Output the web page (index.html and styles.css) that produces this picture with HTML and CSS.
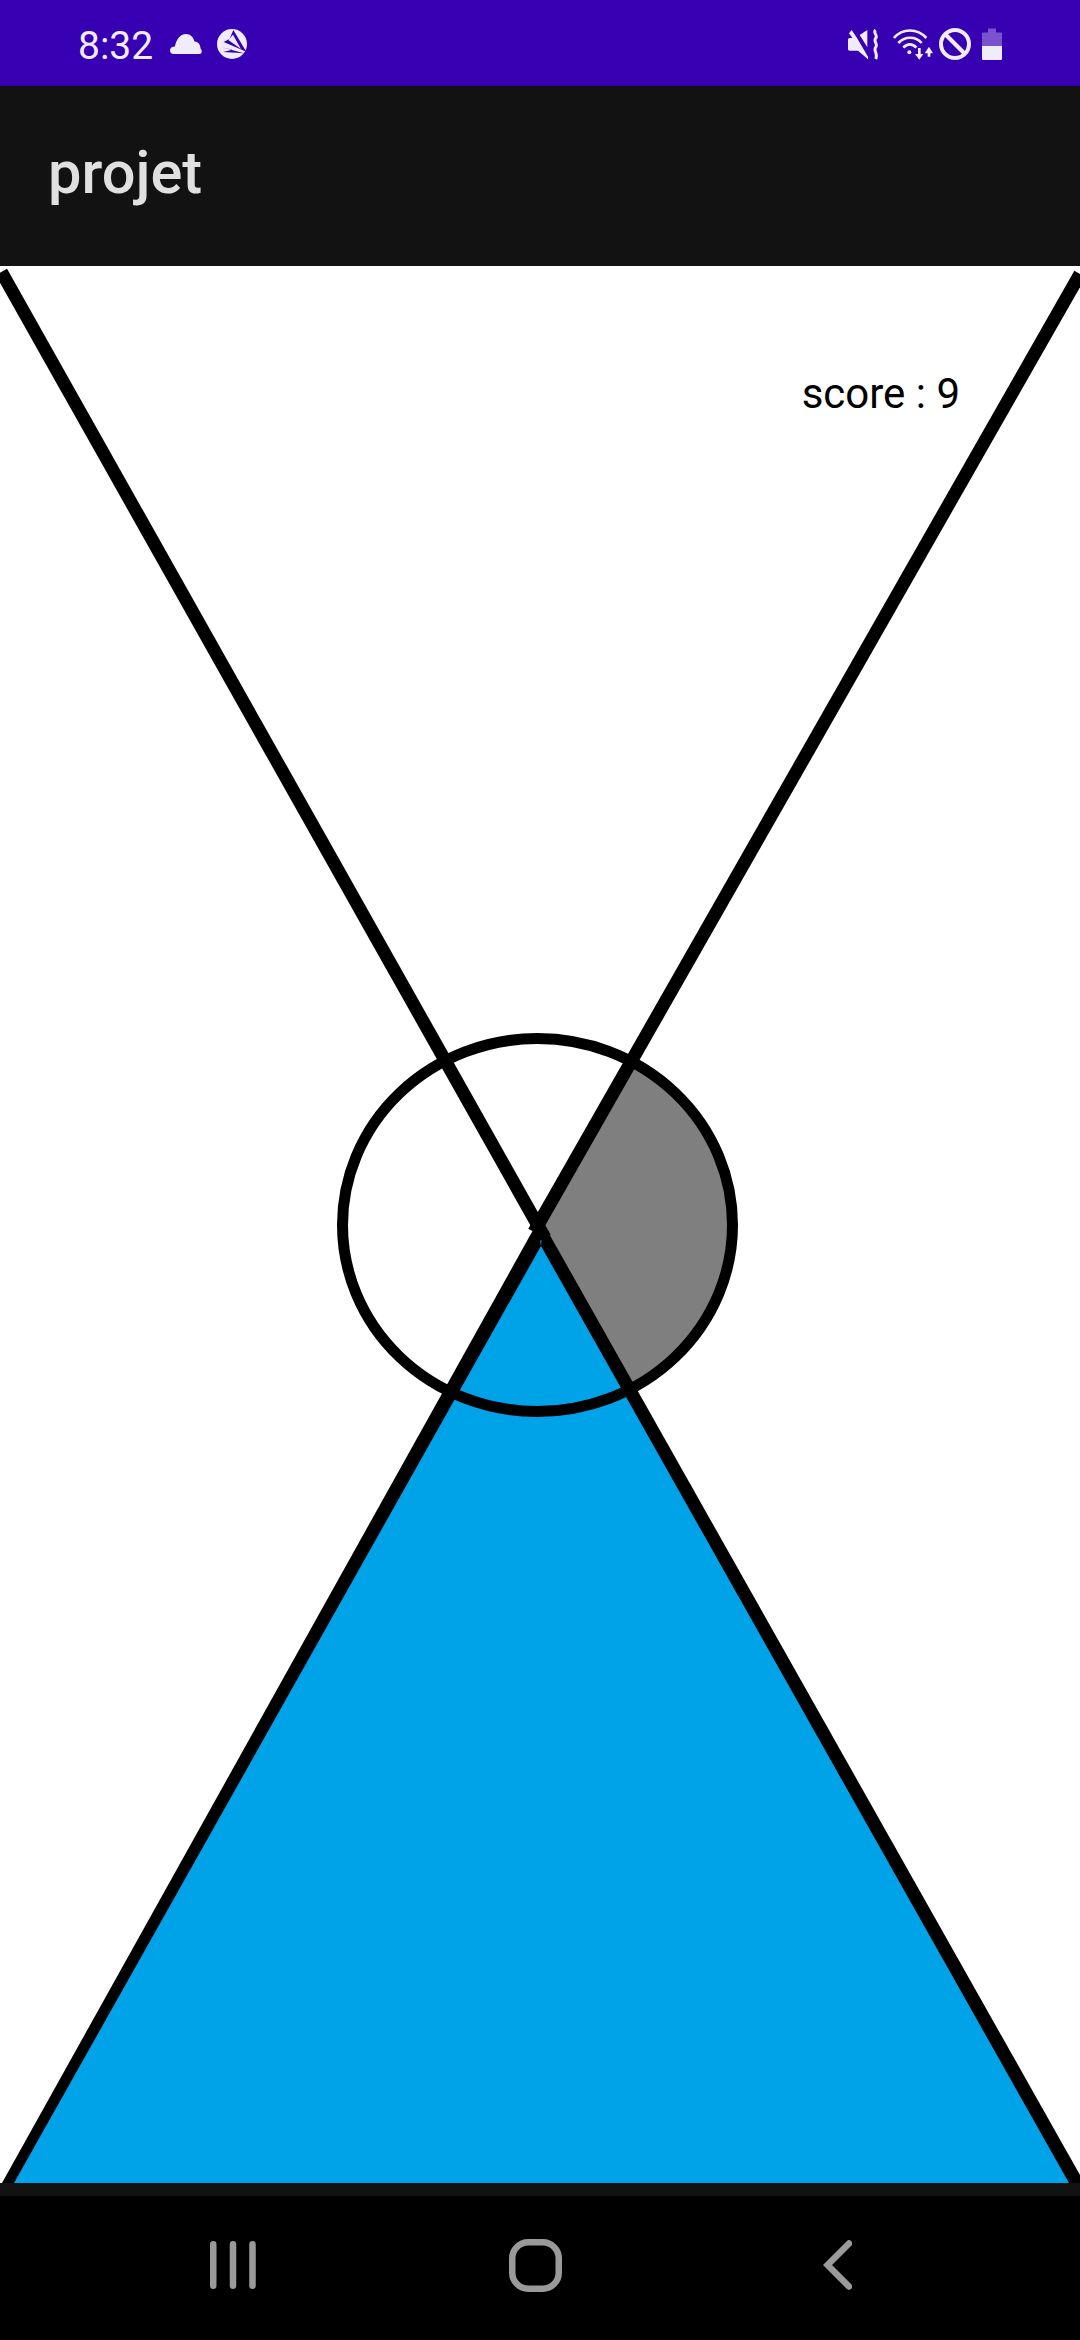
FILE: index.html
```html
<!DOCTYPE html>
<html lang="fr">
<head>
<meta charset="utf-8">
<title>projet</title>
<link rel="stylesheet" href="styles.css">
</head>
<body>
<div class="screen">
  <header class="status">
    <div class="status-left">
      <span class="time">8:32</span>
      <svg class="ic-cloud" viewBox="0 0 32 20"><path d="M3.500 20C1 20 0 18 0 16.500C0 14 2 12.500 5 12.500C6 6 10 0 16 0C20.500 0 23.500 3.500 24.500 7.500C28 7.500 30.500 10.500 30.500 14.500C32 15.500 32.500 20 29.500 20Z"/></svg>
      <svg class="ic-app" viewBox="654 87 90 90"><circle class="fg" cx="699" cy="132" r="45"/><path class="cut" d="M703 90L742 155L674 126L692 116Z"/><path class="fg" d="M702 104L726 147L688 120Z"/><path class="cut" d="M668 142L735 160L672 156L700 149Z"/></svg>
    </div>
    <div class="status-right">
      <svg class="ic-mute" viewBox="145 85 96 93"><path class="fill" d="M148 98L156 88L172 112L205 168V176L175 150H150Q145 150 145 145V117Q145 112 150 112H158Z"/><path class="fill" d="M180 103L203 88V140Z"/><path class="wave" d="M228 88C218 96 236 104 228 113C220 122 236 130 228 140C220 150 236 158 228 175"/></svg>
      <svg class="ic-wifi" viewBox="277 85 120 93"><path class="arc" d="M280 112C305 82 350 82 377 112"/><path class="arc" d="M293 127C312 106 345 106 363 127"/><path class="arc" d="M308 141C320 128 335 128 347 141"/><circle cx="326" cy="155" r="6"/><path d="M352 142H360V160H368L356 177L343 160H352Z"/><path d="M381 168V158H372L385 138L397 158H389V168Z"/></svg>
      <svg class="ic-block" viewBox="0 0 32 32"><circle cx="16" cy="16" r="14"/><path d="M6.500 6.500L25.500 25.500"/></svg>
      <svg class="ic-batt" viewBox="0 0 20 32"><path class="empty" d="M6 .5H14V4.500H18.500C19.500 4.500 20 5 20 6V18H0V6C0 5 .5 4.500 1.500 4.500H6Z"/><path class="full" d="M0 18H20V30.500C20 31.500 19.500 32 18.500 32H1.500C.5 32 0 31.500 0 30.500Z"/></svg>
    </div>
  </header>
  <header class="appbar"><h1 class="title">projet</h1></header>
  <main class="stage">
    <svg class="drawing" viewBox="0 0 1080 1917">
      <path class="blue" d="M8 1917L540 970L1075 1917Z"/>
      <path class="grey" d="M538 961L633 797A195 186.500 0 0 1 627 1121Z"/>
      <ellipse class="ring" cx="537.500" cy="959" rx="195" ry="186.500"/>
      <path class="line" d="M1.400 6L545 972"/>
      <path class="line" d="M1080 8L534 966"/>
      <path class="edge" d="M537 957L2 1917H14L541 980Z"/>
      <path class="edge" d="M541 980L1069 1917H1080L1080 1909L543 957Z"/>
    </svg>
    <p class="score">score : 9</p>
  </main>
  <div class="band"></div>
  <nav class="navbar">
    <svg class="ic-recents" viewBox="0 0 46 48"><path d="M3.250 3.250V44.750M23 3.250V44.750M42.500 3.250V44.750"/></svg>
    <svg class="ic-home" viewBox="0 0 53 53"><rect x="3.250" y="3.250" width="46.500" height="46.500" rx="16"/></svg>
    <svg class="ic-back" viewBox="0 0 29 50"><path d="M26 3.500L4.500 25L26 46.500"/></svg>
  </nav>
</div>
</body>
</html>
```
FILE: styles.css
```css
html, body { margin: 0; padding: 0; }
body { background: #fff; font-family: Roboto, "Liberation Sans", sans-serif; }
.screen { width: 1080px; height: 2340px; display: flex; flex-direction: column; overflow: hidden; }

.status { height: 86px; flex: none; background: #3700b3; display: flex; justify-content: space-between; align-items: center; box-sizing: border-box; padding: 2px 78px 0 78px; color: #f1ecfb; }
.status-left, .status-right { display: flex; align-items: center; }
.time { font-size: 39px; font-weight: 400; line-height: 46px; padding-top: 3px; color: #f1ecfb; margin-right: 17px; }
.status svg { display: block; fill: #f1ecfb; }
.ic-cloud { width: 32px; height: 20px; margin-right: 15px; }
.ic-app { width: 30px; height: 30px; }
.ic-app .fg { fill: #f1ecfb; }
.ic-app .cut { fill: #3700b3; }
.ic-mute { width: 32px; height: 31px; margin-right: 13px; }
.ic-mute .wave { fill: none; stroke: #f1ecfb; stroke-width: 9; }
.ic-wifi { width: 40px; height: 31px; margin-right: 6px; }
.ic-wifi .arc { fill: none; stroke: #f1ecfb; stroke-width: 8; }
.status .ic-block { width: 32px; height: 32px; margin-right: 11px; fill: none; stroke: #f1ecfb; stroke-width: 4; }
.ic-batt { width: 20px; height: 32px; }
.ic-batt .empty { fill: #7a53cc; }
.ic-batt .full { fill: #f1ecfb; }

.appbar { height: 180px; flex: none; box-sizing: border-box; background: #121212; display: flex; align-items: center; padding: 0 0 6px 48px; }
.title { margin: 0; font-size: 59.500px; font-weight: 500; color: #e0e0e0; }

.stage { position: relative; height: 1917px; flex: none; background: #fff; }
.drawing { display: block; width: 1080px; height: 1917px; }
.blue { fill: #00a2e8; }
.grey { fill: #7f7f7f; }
.ring { fill: none; stroke: #000; stroke-width: 11; }
.line { fill: none; stroke: #000; stroke-width: 13; }
.edge { fill: #000; }
.score { position: absolute; top: 103px; right: 120px; margin: 0; font-size: 42px; line-height: 50px; color: #000; }

.band { height: 13px; flex: none; background: #121212; }
.navbar { flex: 1; box-sizing: border-box; background: #000; display: flex; align-items: center; padding: 0 0 6px 210px; }
.navbar svg { display: block; fill: none; stroke: #9a9a9a; stroke-width: 6.500; stroke-linecap: round; }
.ic-recents { width: 46px; height: 48px; }
.ic-home { width: 53px; height: 53px; margin-left: 253px; }
.ic-back { width: 29px; height: 50px; margin-left: 261px; }
```
